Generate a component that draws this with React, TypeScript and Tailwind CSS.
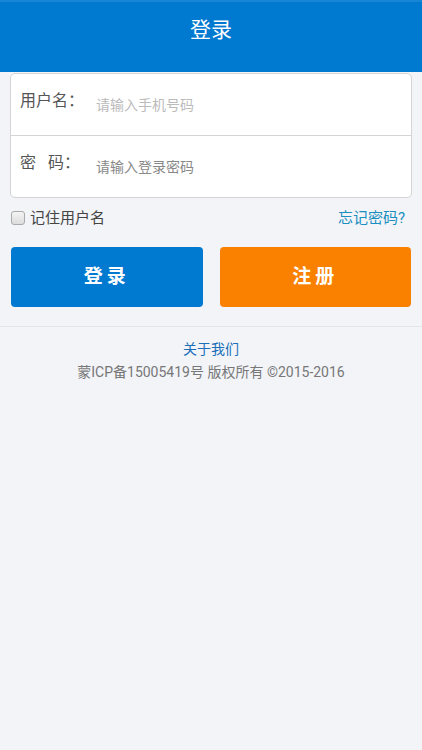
import { useState } from "react";

const font = { fontFamily: "Roboto, 'Noto Sans CJK SC', sans-serif" };

export default function App() {
  const [remember, setRemember] = useState(false);

  return (
    <div className="min-h-[750px] bg-[#f2f4f8]" style={font}>
      <div className="h-[72px] bg-[#0079d1] border-t-2 border-[#1786d6] flex items-center justify-center">
        <h1 className="text-[21px] text-white -mt-[12px]">登录</h1>
      </div>

      <div className="mx-[10px] mt-[1px] bg-white border border-[#d4d4d4] rounded-[5px]">
        <div className="h-[62px] flex items-center border-b border-[#d4d4d4]">
          <span className="w-[85px] pl-[9px] text-[16px] text-[#555] -mt-[8px]">用户名：</span>
          <input
            className="flex-1 text-[14px] text-[#333] placeholder:text-[#bbb] outline-none mt-[2px]"
            placeholder="请输入手机号码"
          />
        </div>
        <div className="h-[61px] flex items-center">
          <span className="w-[85px] pl-[9px] text-[16px] text-[#555] -mt-[8px] whitespace-pre">密   码：</span>
          <input
            type="password"
            className="flex-1 text-[14px] text-[#333] placeholder:text-[#888] outline-none mt-[2px]"
            placeholder="请输入登录密码"
          />
        </div>
      </div>

      <div className="flex items-center justify-between pl-[11px] pr-[17px] mt-[10px] h-[20px]">
        <label className="flex items-center gap-[5px] text-[15px] leading-[20px] text-[#444]">
          <input
            type="checkbox"
            checked={remember}
            onChange={() => setRemember((v) => !v)}
            className="w-[14px] h-[14px] appearance-none border border-[#aaa] rounded-[3px] bg-gradient-to-b from-[#f4f4f4] to-[#dcdcdc]"
          />
          记住用户名
        </label>
        <a className="text-[15px] leading-[20px] text-[#1a8fbf]">忘记密码?</a>
      </div>

      <div className="flex gap-[17px] px-[11px] mt-[19px]">
        <button className="flex-1 h-[60px] rounded-[4px] bg-[#0079d1] text-white text-[19px] font-bold tracking-[4px]">
          登录
        </button>
        <button className="flex-1 h-[60px] rounded-[4px] bg-[#fa8100] text-white text-[19px] font-bold tracking-[4px]">
          注册
        </button>
      </div>

      <div className="mt-[19px] border-t border-[#e3e5e8] pt-[12px] flex flex-col items-center">
        <a className="text-[14px] text-[#1a6fb8] leading-[20px]">关于我们</a>
        <p className="text-[14px] text-[#777] leading-[20px] mt-[3px]">蒙ICP备15005419号 版权所有 ©2015-2016</p>
      </div>
    </div>
  );
}
